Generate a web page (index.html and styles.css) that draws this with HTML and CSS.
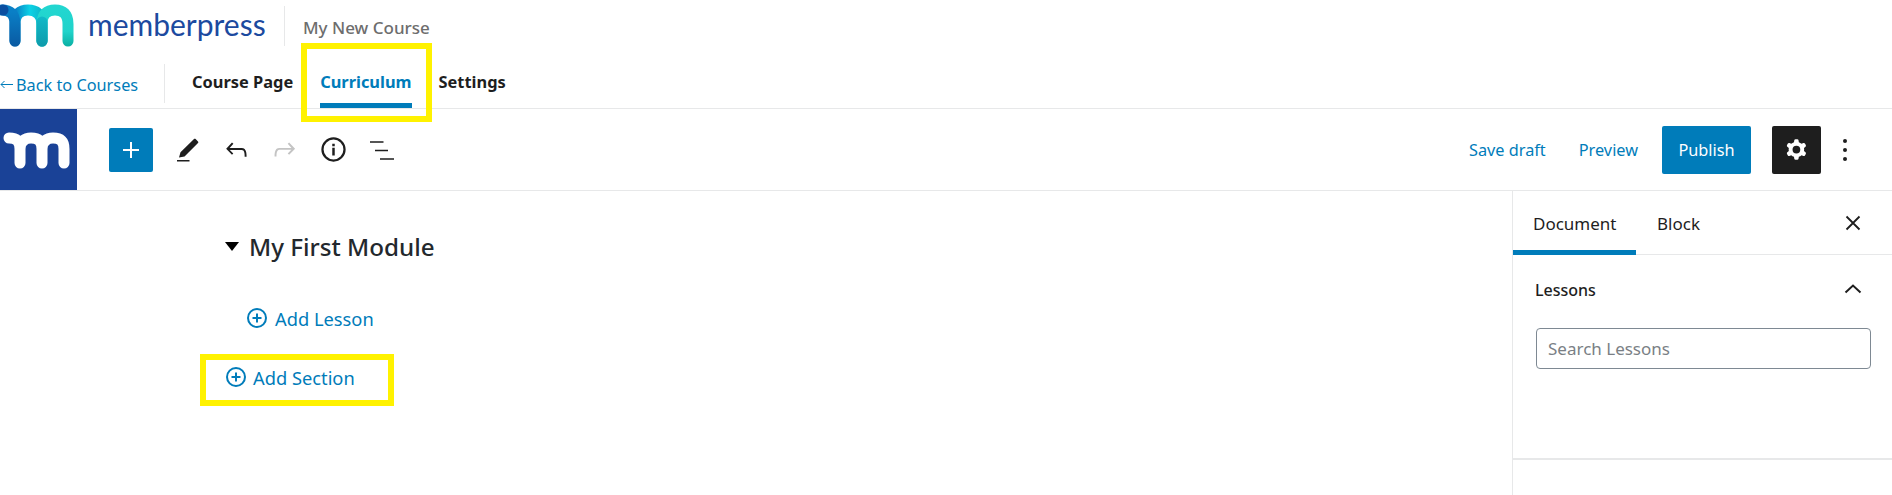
FILE: index.html
```html
<!DOCTYPE html>
<html lang="en">
<head>
  <meta charset="UTF-8" />
  <title>My New Course</title>
  <meta name="viewport" content="width=device-width, initial-scale=1.0" />
  <link rel="stylesheet" href="styles.css">
</head>
<body>
  <div class="brand-bar">
    <svg class="brand-logo" width="74" height="48" viewBox="0 0 74 48" fill="none" stroke-width="11" stroke-linecap="round">
      <defs>
        <linearGradient id="archOne" gradientUnits="userSpaceOnUse" x1="15" y1="0" x2="42" y2="0">
          <stop offset="0" stop-color="#0a7cc4"/>
          <stop offset="0.55" stop-color="#0bd2e6"/>
          <stop offset="1" stop-color="#0fb6c8"/>
        </linearGradient>
        <linearGradient id="archTwo" gradientUnits="userSpaceOnUse" x1="0" y1="10" x2="0" y2="46">
          <stop offset="0" stop-color="#22d6d0"/>
          <stop offset="0.6" stop-color="#20d3ca"/>
          <stop offset="1" stop-color="#0bb0a4"/>
        </linearGradient>
        <linearGradient id="legOne" gradientUnits="userSpaceOnUse" x1="0" y1="12" x2="0" y2="46">
          <stop offset="0" stop-color="#0a7fc6"/>
          <stop offset="1" stop-color="#0a5aa2"/>
        </linearGradient>
        <linearGradient id="legTwo" gradientUnits="userSpaceOnUse" x1="0" y1="14" x2="0" y2="46">
          <stop offset="0" stop-color="#12bccb"/>
          <stop offset="1" stop-color="#0e9bab"/>
        </linearGradient>
      </defs>
      <path d="M15 41V24C15 14 20 10 28 10C36 10 42 14 42 24V41" stroke="url(#archOne)"/>
      <path d="M2 10C10 10 15 14 15 24V41" stroke="url(#legOne)"/>
      <path d="M42 41V24C42 14 47 10 55 10C63 10 68 14 68 24V41" stroke="url(#archTwo)"/>
      <path d="M42 41V22" stroke="url(#legTwo)"/>
      <circle cx="3" cy="10" r="5.5" fill="#0a4ea0"/>
    </svg>
    <span class="brand-name">memberpress</span>
    <span class="course-title">My New Course</span>
  </div>

  <div class="course-nav">
    <a class="back-link">
      <svg width="13" height="9" viewBox="0 0 13 9" fill="none" stroke="#007cba" stroke-width="1"><path d="M13 4.500H1M4.500 1L1 4.500 4.500 8"/></svg>
      <span>Back to Courses</span>
    </a>
    <nav class="course-tabs">
      <a>Course Page</a>
      <a class="active">Curriculum</a>
      <a>Settings</a>
    </nav>
  </div>

  <div class="toolbar">
    <div class="mini-logo">
      <svg width="77" height="81" viewBox="0 0 77 81" fill="none" stroke="#fff" stroke-width="11" stroke-linecap="round">
        <path d="M9 29C16 29 20 32 20 40V54M20 40C20 32 25 29 31 29C38 29 42 32 42 40V54M42 40C42 32 47 29 53 29C60 29 64 32 64 40V54"/>
      </svg>
    </div>
    <button class="add-block">
      <svg width="24" height="24" viewBox="0 0 24 24" fill="#fff"><path d="M11 4h2v7h7v2h-7v7h-2v-7H4v-2h7z"/></svg>
    </button>
    <div class="tool-icons">
      <span><svg width="30" height="30" viewBox="0 0 24 24" fill="#1e1e1e"><path d="M4 21.200h10v-1.300H4zM5.600 18l1.200-4.200L17.600 3.200c.4-.4.900-.4 1.300 0l1.900 1.900c.4.4.4.9 0 1.300L10 17.200z"/></svg></span>
      <span><svg width="31" height="31" viewBox="0 0 24 24" fill="#1e1e1e"><path d="M18.300 11.700c-.6-.6-1.400-.9-2.300-.9H6.700l2.900-3.300-1.100-1-4.500 5L8.500 16l1-1-2.700-2.700H16c.5 0 .9.2 1.300.5 1 1 1 3.400 1 4.500v.3h1.500v-.2c0-1.500 0-4.300-1.500-5.700z"/></svg></span>
      <span><svg width="31" height="31" viewBox="0 0 24 24" fill="#c4c4c4"><path d="M15.600 6.500l-1.100 1 2.900 3.300H8c-.9 0-1.700.3-2.300.9-1.400 1.500-1.400 4.200-1.400 5.600v.2h1.500v-.3c0-1.100 0-3.500 1-4.500.3-.3.7-.5 1.300-.5h9.200L14.500 15l1.100 1.100 4.600-4.600-4.600-5z"/></svg></span>
      <span><svg width="27" height="27" viewBox="0 0 24 24" fill="#1e1e1e"><path d="M12 1.200a10.800 10.800 0 1 0 0 21.600 10.800 10.800 0 0 0 0-21.600zm0 2a8.800 8.800 0 1 1 0 17.600 8.800 8.800 0 0 1 0-17.600zM10.900 10.400h2.200v7h-2.200zM10.900 6.800h2.200V9h-2.200z"/></svg></span>
      <span><svg width="24" height="24" viewBox="0 0 24 24" fill="#1e1e1e"><path d="M0 3.200h13.500v1.600H0zM5 11.700h13v1.600H5zM10 20.200h14v1.600H10z"/></svg></span>
    </div>
    <div class="toolbar-right">
      <a class="text-action">Save draft</a>
      <a class="text-action preview">Preview</a>
      <button class="publish">Publish</button>
      <button class="settings-toggle">
        <svg width="31" height="31" viewBox="0 0 24 24" fill="#fff"><path fill-rule="evenodd" d="M10.289 4.836A1 1 0 0111.275 4h1.306a1 1 0 01.987.836l.244 1.466c.787.26 1.503.679 2.108 1.218l1.393-.522a1 1 0 011.216.437l.653 1.130a1 1 0 01-.23 1.273l-1.148.944a6.025 6.025 0 010 2.435l1.149.946a1 1 0 01.23 1.272l-.653 1.130a1 1 0 01-1.216.437l-1.394-.522c-.605.54-1.320.958-2.108 1.218l-.244 1.466a1 1 0 01-.987.836h-1.306a1 1 0 01-.986-.836l-.244-1.466a5.995 5.995 0 01-2.108-1.218l-1.394.522a1 1 0 01-1.217-.436l-.653-1.131a1 1 0 01.23-1.272l1.149-.946a6.026 6.026 0 010-2.435l-1.148-.944a1 1 0 01-.23-1.272l.653-1.131a1 1 0 011.217-.437l1.393.522a5.994 5.994 0 012.108-1.218l.244-1.466zM14.929 12a3 3 0 11-6 0 3 3 0 016 0z"/></svg>
      </button>
      <span class="more-dots"><i></i><i></i><i></i></span>
    </div>
  </div>

  <div class="workspace">
    <main class="curriculum">
      <h2 class="module-title"><span class="caret"></span>My First Module</h2>
      <a class="add-link add-lesson">
        <svg width="22" height="22" viewBox="0 0 22 22" fill="none" stroke="#007cba" stroke-width="2"><circle cx="11" cy="11" r="9"/><path d="M11 6.500v9M6.500 11h9"/></svg>
        Add Lesson
      </a>
      <a class="add-link add-section">
        <svg width="22" height="22" viewBox="0 0 22 22" fill="none" stroke="#007cba" stroke-width="2"><circle cx="11" cy="11" r="9"/><path d="M11 6.500v9M6.500 11h9"/></svg>
        Add Section
      </a>
    </main>
    <aside class="sidebar">
      <div class="sidebar-tabs">
        <a class="active">Document</a>
        <a>Block</a>
        <svg class="close-icon" width="24" height="24" viewBox="0 0 24 24" fill="none" stroke="#1e1e1e" stroke-width="1.800"><path d="M5.500 5.500l13 13M18.500 5.500l-13 13"/></svg>
      </div>
      <section class="lessons-panel">
        <div class="panel-head">
          <span>Lessons</span>
          <svg width="24" height="24" viewBox="0 0 24 24" fill="none" stroke="#1e1e1e" stroke-width="2"><path d="M4.500 15.500L12 8.500l7.500 7"/></svg>
        </div>
        <input class="lesson-search" type="text" placeholder="Search Lessons" />
      </section>
    </aside>
  </div>

  <div class="highlight highlight-tab"></div>
  <div class="highlight highlight-section"></div>
</body>
</html>
```

FILE: styles.css
```css
:root {
  --primary: #007cba;
  --line: #e7e8e9;
  --ink: #1e1e1e;
}

* {
  box-sizing: border-box;
}

body {
  margin: 0;
  height: 495px;
  overflow: hidden;
  position: relative;
  background: white;
  color: var(--ink);
  font-family: "Noto Sans", "Open Sans", sans-serif;
}

button {
  border: none;
  font-family: inherit;
  padding: 0;
}

.brand-bar {
  height: 60px;
  display: flex;
  align-items: center;
}

.brand-logo {
  flex: none;
  margin-bottom: 12px;
}

.brand-name {
  width: 211px;
  padding-left: 14px;
  height: 40px;
  margin-bottom: 9px;
  line-height: 36px;
  border-right: 1px solid var(--line);
  color: #1c4a9f;
  font-family: Lato, sans-serif;
  font-size: 30px;
}

.course-title {
  margin-left: 18px;
  margin-bottom: 6px;
  font-size: 17px;
  font-weight: 500;
  color: #6d6d6d;
}

.course-nav {
  height: 49px;
  display: flex;
  border-bottom: 1px solid var(--line);
}

.back-link {
  width: 165px;
  height: 39px;
  margin-top: 4px;
  display: flex;
  align-items: center;
  gap: 3px;
  padding-top: 2px;
  border-right: 1px solid var(--line);
  color: var(--primary);
  font-size: 16.3px;
}

.course-tabs {
  display: flex;
  gap: 27px;
  margin-left: 27px;
  font-size: 16.4px;
  font-weight: 700;
}

.course-tabs a {
  height: 48px;
  line-height: 44px;
}

.course-tabs .active {
  color: var(--primary);
  border-bottom: 5px solid var(--primary);
}

.toolbar {
  height: 82px;
  display: flex;
  align-items: center;
  border-bottom: 1px solid var(--line);
}

.mini-logo {
  width: 77px;
  height: 81px;
  background: #1a4297;
}

.mini-logo svg {
  display: block;
}

.add-block {
  width: 44px;
  height: 44px;
  margin-left: 32px;
  border-radius: 2px;
  background: var(--primary);
  display: flex;
  align-items: center;
  justify-content: center;
}

.tool-icons {
  display: flex;
  margin-left: 10px;
}

.tool-icons span {
  width: 48.7px;
  display: flex;
  align-items: center;
  justify-content: center;
}

.toolbar-right {
  margin-left: auto;
  display: flex;
  align-items: center;
  padding-right: 45px;
}

.text-action {
  color: var(--primary);
  font-size: 16.3px;
  margin-right: 33px;
}

.text-action.preview {
  margin-right: 24px;
}

.publish {
  width: 89px;
  height: 48px;
  margin-right: 21px;
  border-radius: 2px;
  background: var(--primary);
  color: white;
  font-size: 16.3px;
}

.settings-toggle {
  width: 49px;
  height: 48px;
  border-radius: 2px;
  background: var(--ink);
  display: flex;
  align-items: center;
  justify-content: center;
}

.more-dots {
  width: 4px;
  margin-left: 22px;
  display: flex;
  flex-direction: column;
  gap: 5px;
}

.more-dots i {
  width: 4px;
  height: 4px;
  border-radius: 50%;
  background: var(--ink);
}

.workspace {
  height: 304px;
  display: flex;
}

.curriculum {
  flex: 1;
  padding-left: 225px;
}

.module-title {
  margin: 35px 0 0;
  height: 40px;
  display: flex;
  align-items: center;
  font-size: 24.2px;
  font-weight: 500;
  color: #23282d;
}

.caret {
  width: 0;
  height: 0;
  margin-right: 10px;
  border-left: 7px solid transparent;
  border-right: 7px solid transparent;
  border-top: 9px solid black;
}

.add-link {
  display: flex;
  align-items: center;
  gap: 6px;
  height: 30px;
  color: var(--primary);
  font-size: 18.3px;
}

.add-lesson {
  margin: 37px 0 0 21px;
  gap: 7px;
}

.add-section {
  margin: 29px 0 0;
}

.sidebar {
  width: 380px;
  border-left: 1px solid var(--line);
}

.sidebar-tabs {
  height: 64px;
  display: flex;
  align-items: center;
  border-bottom: 1px solid var(--line);
  font-size: 17px;
}

.sidebar-tabs a {
  height: 64px;
  line-height: 65px;
  padding: 0 20px;
}

.sidebar-tabs .active {
  width: 123px;
  padding: 0 20px;
  margin-right: 1px;
  border-bottom: 5px solid var(--primary);
}

.close-icon {
  margin-left: auto;
  margin-right: 27px;
}

.lessons-panel {
  height: 205px;
  padding: 0 18px 0 23px;
  border-bottom: 2px solid var(--line);
}

.panel-head {
  height: 73px;
  padding-right: 9px;
  display: flex;
  align-items: center;
  justify-content: space-between;
  font-size: 16px;
  font-weight: 500;
}

.panel-head span {
  margin: -3px 0 0 -1px;
}

.panel-head svg {
  margin-top: -5px;
}

.lesson-search {
  display: block;
  width: 335px;
  height: 41px;
  padding: 0 11px;
  border: 1px solid #7e8993;
  border-radius: 4px;
  font-family: inherit;
  font-size: 17px;
}

.lesson-search::placeholder {
  color: #7a7f85;
}

/* annotation boxes sit on top of the screenshot */
.highlight {
  position: absolute;
  border: 6px solid #fff200;
}

.highlight-tab {
  left: 301px;
  top: 43px;
  width: 131px;
  height: 79px;
}

.highlight-section {
  left: 200px;
  top: 354px;
  width: 194px;
  height: 52px;
}
```
